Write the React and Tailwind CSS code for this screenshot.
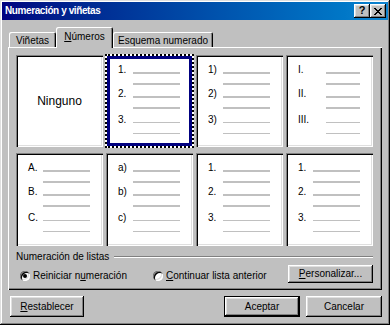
import React from "react";

function Cell({ labels, wide, selected }) {
  const content = (
    <div className={`flex flex-col ${selected ? "pt-[6px] pl-[8px]" : "pt-[8px] pl-[10px]"}`}>
      {labels.map((l, i) => (
        <div key={i} className={`flex ${i === 1 ? "mt-[4px]" : i === 2 ? "mt-[6px]" : ""}`}>
          <span className={`${wide ? "w-[28px]" : "w-[15px]"} h-[10px] text-[10px] leading-[10px] text-black`}>{l}</span>
          <div className={`flex flex-col pt-[7px] ${i === 2 ? "gap-[10px]" : "gap-[9px]"}`}>
            <div className={`${wide ? "w-[34px]" : "w-[47px]"} ${i === 2 ? "h-[1px]" : "h-[2px]"} bg-[#c0c0c0]`} />
            <div className={`${wide ? "w-[34px]" : "w-[47px]"} ${i === 2 ? "h-[1px]" : "h-[2px]"} bg-[#c0c0c0]`} />
          </div>
        </div>
      ))}
    </div>
  );
  if (selected) {
    return (
      <div className="-m-[1px] w-[89px] h-[94px] border-2 border-dotted border-black bg-white">
        <div className="w-full h-full border-[3px] border-[#000080] bg-white">{content}</div>
      </div>
    );
  }
  return (
    <div className="w-[87px] h-full bg-white shadow-[inset_1px_1px_#808080,inset_2px_2px_#000,inset_-1px_-1px_#fff,inset_-2px_-2px_#dfdfdf] p-[2px]">
      {content}
    </div>
  );
}

function Radio({ checked }) {
  return (
    <div className="w-[10px] h-[10px] rounded-full bg-white shadow-[inset_1px_1px_#808080,inset_2px_2px_#000,inset_-1px_-1px_#fff,inset_-2px_-2px_#dfdfdf] flex items-center justify-center">
      {checked && <div className="w-[4px] h-[4px] rounded-full bg-black" />}
    </div>
  );
}

export default function App() {
  return (
    <div className="w-[390px] h-[325px] bg-[#c0c0c0] p-[2px] flex flex-col font-['Liberation_Sans',Arial,sans-serif] text-black shadow-[inset_-1px_-1px_#000,inset_1px_1px_#dfdfdf,inset_-2px_-2px_#808080,inset_2px_2px_#fff] overflow-hidden">
      {/* Title bar */}
      <div className="h-[18px] flex items-center bg-linear-to-r from-[#000080] to-[#1084d0] pl-[3px] pr-[2px]">
        <span className="text-white font-bold text-[10px] tracking-[-0.4px] leading-none">Numeración y viñetas</span>
        <div className="ml-auto flex">
          <div className="w-[16px] h-[14px] bg-[#c0c0c0] shadow-[inset_-1px_-1px_#000,inset_1px_1px_#fff,inset_-2px_-2px_#808080,inset_2px_2px_#dfdfdf] flex items-center justify-center text-[11px] font-bold leading-none pb-[1px]">?</div>
          <div className="w-[16px] h-[14px] bg-[#c0c0c0] shadow-[inset_-1px_-1px_#000,inset_1px_1px_#fff,inset_-2px_-2px_#808080,inset_2px_2px_#dfdfdf] flex items-center justify-center">
            <svg width="8" height="7" viewBox="0 0 8 7" shapeRendering="crispEdges">
              <path d="M0 0h2v1h-2zM6 0h2v1h-2zM1 1h2v1h-2zM5 1h2v1h-2zM2 2h4v1h-4zM3 3h2v1h-2zM2 4h4v1h-4zM1 5h2v1h-2zM5 5h2v1h-2zM0 6h2v1h-2zM6 6h2v1h-2z" fill="#000" />
            </svg>
          </div>
        </div>
      </div>

      {/* Tabs */}
      <div className="mt-[7px] h-[20px] flex items-end pl-[7px] text-[10px]">
        <div className="w-[47px] h-[15px] rounded-t-[2px] shadow-[inset_1px_1px_#fff,inset_-1px_0_#000,inset_-2px_0_#808080] flex items-center justify-center pt-[2px]">Viñetas</div>
        <div className="relative z-10 w-[57px] h-[21px] -mb-[1px] bg-[#c0c0c0] rounded-t-[2px] shadow-[inset_1px_1px_#fff,inset_-1px_0_#000,inset_-2px_0_#808080] flex items-center justify-center pb-[2px]">
          <span><span className="underline">N</span>úmeros</span>
        </div>
        <div className="w-[100px] h-[15px] rounded-t-[2px] shadow-[inset_1px_1px_#fff,inset_-1px_0_#000,inset_-2px_0_#808080] flex items-center justify-center pt-[2px]">Esquema numerado</div>
      </div>

      {/* Panel */}
      <div className="ml-[6px] w-[374px] h-[243px] shadow-[inset_1px_1px_#fff,inset_-1px_-1px_#000,inset_-2px_-2px_#808080] pt-[8px] pl-[8px] flex flex-col">
        <div className="grid grid-cols-[87px_87px_87px_87px] grid-rows-[92px_93px] gap-x-[3px] gap-y-[6px]">
          <div className="w-[87px] h-full bg-white shadow-[inset_1px_1px_#808080,inset_2px_2px_#000,inset_-1px_-1px_#fff,inset_-2px_-2px_#dfdfdf] flex items-center justify-center text-[12px]">
            Ninguno
          </div>
          <Cell labels={["1.", "2.", "3."]} selected />
          <Cell labels={["1)", "2)", "3)"]} />
          <Cell labels={["I.", "II.", "III."]} wide />
          <Cell labels={["A.", "B.", "C."]} />
          <Cell labels={["a)", "b)", "c)"]} />
          <Cell labels={["1.", "2.", "3."]} />
          <Cell labels={["1.", "2.", "3."]} />
        </div>

        {/* Group */}
        <div className="mt-[4px] flex items-center h-[13px] text-[10px] pr-[9px]">
          <span>Numeración de listas</span>
          <div className="flex-1 ml-[5px] h-[2px] border-t border-t-[#808080] border-b border-b-white" />
        </div>
        <div className="mt-[1px] flex items-center h-[19px] text-[10px] pr-[9px]">
          <div className="w-[137px] flex items-center gap-[3px] pl-[4px] pt-[4px]">
            <Radio checked />
            <span>Reiniciar <span>n</span><span className="underline">u</span>meración</span>
          </div>
          <div className="flex items-center gap-[3px] pt-[4px]">
            <Radio />
            <span><span className="underline">C</span>ontinuar lista anterior</span>
          </div>
          <div className="ml-auto w-[85px] h-[18px] bg-[#c0c0c0] shadow-[inset_-1px_-1px_#000,inset_1px_1px_#fff,inset_-2px_-2px_#808080,inset_2px_2px_#dfdfdf] flex items-center justify-center">
            <span><span className="underline">P</span>ersonalizar...</span>
          </div>
        </div>
      </div>

      {/* Buttons */}
      <div className="mt-[6px] flex h-[21px] text-[10px] pl-[8px] pr-[6px]">
        <div className="w-[74px] h-full shadow-[inset_-1px_-1px_#000,inset_1px_1px_#fff,inset_-2px_-2px_#808080,inset_2px_2px_#dfdfdf] flex items-center justify-center">
          <span><span className="underline">R</span>establecer</span>
        </div>
        <div className="ml-auto w-[76px] h-full shadow-[inset_0_0_0_1px_#000,inset_-2px_-2px_#000,inset_2px_2px_#fff,inset_-3px_-3px_#808080,inset_3px_3px_#dfdfdf] flex items-center justify-center">
          Aceptar
        </div>
        <div className="ml-[6px] w-[76px] h-full shadow-[inset_-1px_-1px_#000,inset_1px_1px_#fff,inset_-2px_-2px_#808080,inset_2px_2px_#dfdfdf] flex items-center justify-center">
          Cancelar
        </div>
      </div>
    </div>
  );
}
